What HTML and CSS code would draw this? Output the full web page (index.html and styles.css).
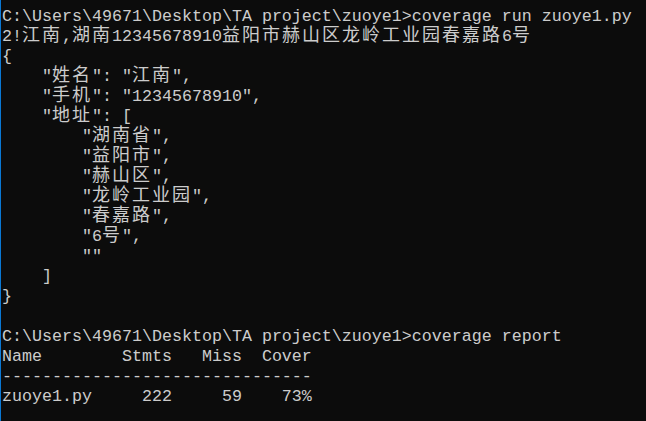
FILE: index.html
```html
<!DOCTYPE html>
<html lang="zh-CN">
<head>
<meta charset="utf-8">
<title>cmd</title>
<link rel="stylesheet" href="styles.css">
</head>
<body>
<div class="console">
<div class="ln">C:\Users\49671\Desktop\TA project\zuoye1&gt;coverage run zuoye1.py</div>
<div class="ln">2!<span class="c">江南</span>,<span class="c">湖南</span>12345678910<span class="c">益阳市赫山区龙岭工业园春嘉路</span>6<span class="c">号</span></div>
<div class="ln">{</div>
<div class="ln">    "<span class="c">姓名</span>": "<span class="c">江南</span>",</div>
<div class="ln">    "<span class="c">手机</span>": "12345678910",</div>
<div class="ln">    "<span class="c">地址</span>": [</div>
<div class="ln">        "<span class="c">湖南省</span>",</div>
<div class="ln">        "<span class="c">益阳市</span>",</div>
<div class="ln">        "<span class="c">赫山区</span>",</div>
<div class="ln">        "<span class="c">龙岭工业园</span>",</div>
<div class="ln">        "<span class="c">春嘉路</span>",</div>
<div class="ln">        "6<span class="c">号</span>",</div>
<div class="ln">        ""</div>
<div class="ln">    ]</div>
<div class="ln">}</div>
<div class="ln"> </div>
<div class="ln">C:\Users\49671\Desktop\TA project\zuoye1&gt;coverage report</div>
<div class="ln">Name        Stmts   Miss  Cover</div>
<div class="ln">-------------------------------</div>
<div class="ln">zuoye1.py     222     59    73%</div>
<div class="ln"> </div>
</div>
</body>
</html>
```
FILE: styles.css
```css
html, body {
  margin: 0;
  padding: 0;
  background: #0c0c0c;
}
body {
  width: 646px;
  height: 421px;
  overflow: hidden;
}
.console {
  box-sizing: border-box;
  height: 421px;
  border-left: 1px solid #0a78d4;
  padding: 7px 0 0 1px;
  color: #cccccc;
  font-family: "Liberation Mono", monospace;
  font-size: 16.667px;
  line-height: 20px;
}
.ln {
  height: 20px;
  white-space: pre;
}
.c {
  font-family: "Noto Sans CJK SC", sans-serif;
  font-size: 18px;
  letter-spacing: 2px;
  line-height: 0;
}
```
